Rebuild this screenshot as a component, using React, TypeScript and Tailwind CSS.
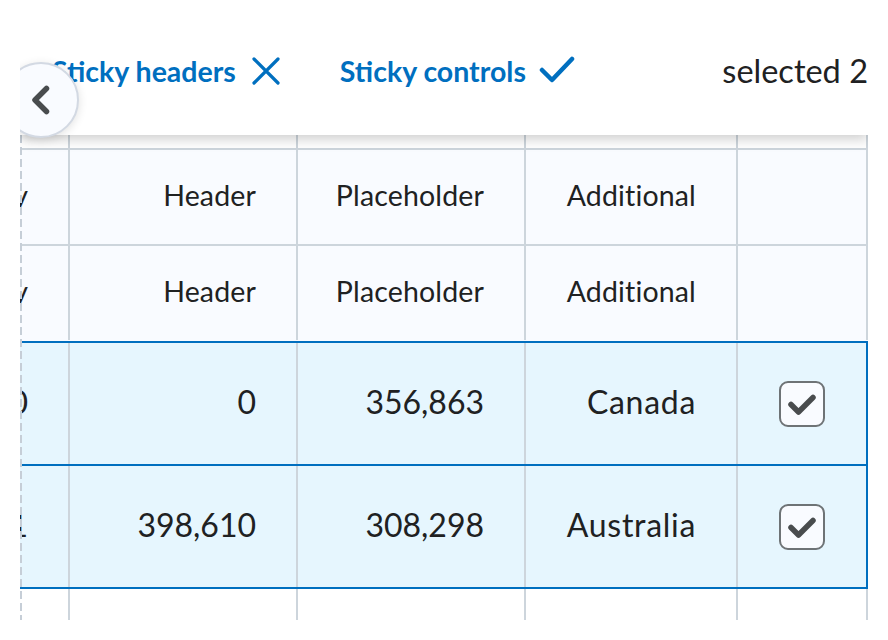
import type { ReactNode } from "react";

const grid = "grid grid-cols-[50px_228px_228px_212px_130px]";

function Cell({ children, edge, extra }: { children?: ReactNode; edge?: string; extra?: string }) {
  return (
    <div
      className={`flex items-center justify-end overflow-visible whitespace-nowrap border-r-2 pr-[40px] ${edge ?? "border-[#cdd5dc]"} ${extra ?? ""}`}
    >
      {children}
    </div>
  );
}

function Checkbox() {
  return (
    <div className="flex h-[46px] w-[46px] items-center justify-center rounded-[9px] border-2 border-[#6e7376] bg-[#f9fbff]">
      <svg width="46" height="46" viewBox="0 0 46 46" className="-m-[2px]">
        <path d="M12 23.5 L19.5 31 L34 16.5" fill="none" stroke="#494c4e" strokeWidth="5.5" strokeLinecap="round" strokeLinejoin="round" />
      </svg>
    </div>
  );
}

function HeaderRow() {
  return (
    <div className={`${grid} h-[96px] border-t-2 border-[#cdd5dc] bg-[#f9fbff] text-[28.5px] tracking-[0.15px]`}>
      <Cell extra="pb-[4px]">Country</Cell>
      <Cell extra="pb-[4px]">Header</Cell>
      <Cell extra="pb-[4px]">Placeholder</Cell>
      <Cell extra="pb-[4px]">Additional</Cell>
      <Cell />
    </div>
  );
}

function SelectedRow({ values }: { values: string[] }) {
  return (
    <div className={`${grid} h-[123px] border-t-2 border-[#006fbf] bg-[#e6f6fe] text-[32px]`}>
      {values.map((v, i) => (
        <Cell key={i} extra={i === 3 ? "pb-[4px] tracking-[0.7px]" : "pb-[4px]"}>
          {v}
        </Cell>
      ))}
      <div className="flex items-center justify-center border-r-2 border-[#006fbf]">
        <Checkbox />
      </div>
    </div>
  );
}

export default function App() {
  return (
    <div className="h-[640px] w-[888px] overflow-hidden bg-white font-['Lato',sans-serif] text-[#202122]">
      <div className="relative ml-[20px] flex h-[620px] w-[848px] flex-col overflow-hidden">
        {/* scroll button */}
        <button
          type="button"
          className="absolute left-[-17px] top-[62px] z-30 flex h-[76px] w-[76px] items-center justify-center rounded-full border-2 border-[#d3d9e3] bg-[#f9fbff] shadow-[0_2px_10px_rgba(0,0,0,0.12)]"
        >
          <svg width="76" height="76" viewBox="0 0 76 76" className="-m-[2px] shrink-0">
            <path d="M43.5 26.5 L32 38 L43.5 49.5" fill="none" stroke="#494c4e" strokeWidth="5.5" strokeLinecap="round" strokeLinejoin="round" />
          </svg>
        </button>

        {/* sticky controls */}
        <div className="relative z-20 h-[135px] shrink-0 bg-white shadow-[0_4px_12px_rgba(0,0,0,0.2)]">
          <div className="mt-[51px] flex h-[40px] items-center pl-[32px]">
            <button type="button" className="flex items-center gap-[15px] text-[28.5px] font-bold text-[#006fbf]">
              Sticky headers
              <svg width="30" height="30" viewBox="0 0 30 30">
                <path d="M3 3 L27 27 M27 3 L3 27" stroke="#006fbf" strokeWidth="3.2" strokeLinecap="round" />
              </svg>
            </button>
            <button type="button" className="ml-[59px] flex items-center gap-[13px] text-[28.5px] font-bold text-[#006fbf]">
              Sticky controls
              <svg width="36" height="30" viewBox="0 0 36 30">
                <path d="M3 14 L13 24 L33 3" fill="none" stroke="#006fbf" strokeWidth="4.5" strokeLinecap="round" strokeLinejoin="round" />
              </svg>
            </button>
            <span className="ml-auto text-[32.5px]">selected 2</span>
          </div>
        </div>

        {/* left dashed edge */}
        <div className="absolute bottom-0 left-0 top-[135px] z-10 w-[2px] bg-[repeating-linear-gradient(to_bottom,#c6ced7_0_8px,transparent_8px_12px)]" />

        {/* table */}
        <div className={`${grid} h-[13px] shrink-0`}>
          <Cell />
          <Cell />
          <Cell />
          <Cell />
          <Cell />
        </div>
        <HeaderRow />
        <HeaderRow />
        <div className="h-[1px] shrink-0 bg-[#f9fbff]" />
        <SelectedRow values={["10", "0", "356,863", "Canada"]} />
        <SelectedRow values={["1", "398,610", "308,298", "Australia"]} />
        <div className={`${grid} flex-1 border-t-2 border-[#006fbf]`}>
          <Cell />
          <Cell />
          <Cell />
          <Cell />
          <Cell />
        </div>
      </div>
    </div>
  );
}
